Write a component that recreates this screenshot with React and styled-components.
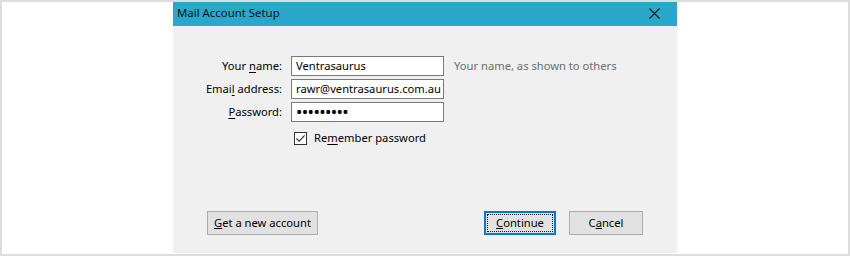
import React from 'react';
import styled, {createGlobalStyle} from 'styled-components';

const GlobalStyle = createGlobalStyle`
    html, body {
        margin: 0;
        padding: 0;
        background: #fff;
    }
    body {
        font-family: "Noto Sans", "Open Sans", sans-serif;
        font-size: 11.2px;
        color: #000;
    }
`;

const FIELDS = [
    {label: ['Your ', 'n', 'ame:'], value: 'Ventrasaurus', hint: 'Your name, as shown to others'},
    {label: ['Emai', 'l', ' address:'], value: 'rawr@ventrasaurus.com.au'},
    {label: ['', 'P', 'assword:'], value: '123456789', type: 'password'},
];

const App = () => {
    return (
        <STYLE_FRAME>
            <GlobalStyle/>
            <STYLE_DIALOG>
                <STYLE_TITLEBAR>
                    <span>Mail Account Setup</span>
                    <STYLE_CLOSE>
                        <svg width="11" height="11" viewBox="0 0 11 11">
                            <path d="M0.5 0.5 L10.5 10.5 M10.5 0.5 L0.5 10.5" stroke="#1a1a1a" strokeWidth="1.1" fill="none"/>
                        </svg>
                    </STYLE_CLOSE>
                </STYLE_TITLEBAR>

                <STYLE_FORM>
                    {FIELDS.map((f) => (
                        <React.Fragment key={f.value}>
                            <STYLE_LABEL>{f.label[0]}<u>{f.label[1]}</u>{f.label[2]}</STYLE_LABEL>
                            <STYLE_INPUT type={f.type || 'text'} value={f.value} readOnly $password={f.type === 'password'}/>
                            <STYLE_HINT>{f.hint}</STYLE_HINT>
                        </React.Fragment>
                    ))}
                    <span/>
                    <STYLE_CHECKROW>
                        <STYLE_CHECKBOX>
                            <svg width="11" height="11" viewBox="0 0 11 11">
                                <path d="M1.5 5.5 L4.2 8.3 L9.6 2.4" stroke="#222" strokeWidth="1.1" fill="none"/>
                            </svg>
                        </STYLE_CHECKBOX>
                        <span>Re<u>m</u>ember password</span>
                    </STYLE_CHECKROW>
                </STYLE_FORM>

                <STYLE_FOOTER>
                    <STYLE_BUTTON $width={111}><u>G</u>et a new account</STYLE_BUTTON>
                    <STYLE_GROUP>
                        <STYLE_BUTTON $width={72} $default><u>C</u>ontinue</STYLE_BUTTON>
                        <STYLE_BUTTON $width={74}>C<u>a</u>ncel</STYLE_BUTTON>
                    </STYLE_GROUP>
                </STYLE_FOOTER>
            </STYLE_DIALOG>
        </STYLE_FRAME>
    );
};

const STYLE_FRAME = styled.div`
    width: 850px;
    height: 256px;
    box-sizing: border-box;
    border: 2px solid #dddddd;
    background: #fff;
    display: flex;
    justify-content: center;
    align-items: flex-start;
`;

const STYLE_DIALOG = styled.div`
    width: 504px;
    height: 251px;
    background: #f0f0f0;
    display: flex;
    flex-direction: column;
`;

const STYLE_TITLEBAR = styled.div`
    height: 24px;
    box-sizing: border-box;
    background: #29a8cc;
    display: flex;
    align-items: center;
    justify-content: space-between;
    padding: 0 0 3px 4px;
    color: #111;
    font-size: 11.4px;
`;

const STYLE_CLOSE = styled.div`
    width: 46px;
    display: flex;
    align-items: center;
    justify-content: center;
    padding-top: 1px;
`;

const STYLE_FORM = styled.div`
    display: grid;
    grid-template-columns: 109px 153px 1fr;
    column-gap: 9px;
    row-gap: 3px;
    align-items: center;
    padding-top: 30px;

    u{
        text-underline-offset: 2px;
    }
`;

const STYLE_LABEL = styled.label`
    text-align: right;
    white-space: nowrap;
    padding-bottom: 2px;
`;

const STYLE_INPUT = styled.input`
    height: 20px;
    box-sizing: border-box;
    border: 1px solid #7a7a7a;
    background: #fff;
    padding: 0 0 1px 4px;
    margin: 0;
    font-family: inherit;
    font-size: ${(p) => (p.$password ? '17px' : '11.2px')};
    letter-spacing: ${(p) => (p.$password ? '-0.6px' : '0')};
    color: #000;
    outline: none;
    width: 100%;
`;

const STYLE_HINT = styled.span`
    color: #6d6d6d;
    padding-left: 1px;
    padding-bottom: 2px;
    white-space: nowrap;
`;

const STYLE_CHECKROW = styled.div`
    grid-column: 2 / 4;
    display: flex;
    align-items: center;
    gap: 7px;
    height: 20px;
    margin-top: 3px;
    padding-left: 3px;

    > span:last-child{
        padding-bottom: 2px;
    }
`;

const STYLE_CHECKBOX = styled.span`
    width: 13px;
    height: 13px;
    box-sizing: border-box;
    border: 1px solid #333;
    background: #fff;
    display: flex;
    align-items: center;
    justify-content: center;
`;

const STYLE_FOOTER = styled.div`
    margin-top: auto;
    display: flex;
    justify-content: space-between;
    padding: 0 34px 18px 34px;
`;

const STYLE_GROUP = styled.div`
    display: flex;
    gap: 13px;
`;

const STYLE_BUTTON = styled.button`
    position: relative;
    width: ${(p) => p.$width}px;
    height: 24px;
    box-sizing: border-box;
    margin: 0;
    padding: 0 0 2px 0;
    background: #e1e1e1;
    border: ${(p) => (p.$default ? '2px solid #0078d7' : '1px solid #adadad')};
    font-family: inherit;
    font-size: 11.2px;
    color: #000;

    &::after{
        content: '';
        display: ${(p) => (p.$default ? 'block' : 'none')};
        position: absolute;
        inset: 1px;
        border: 1px dotted #1a1a1a;
    }
`;

export default App;
